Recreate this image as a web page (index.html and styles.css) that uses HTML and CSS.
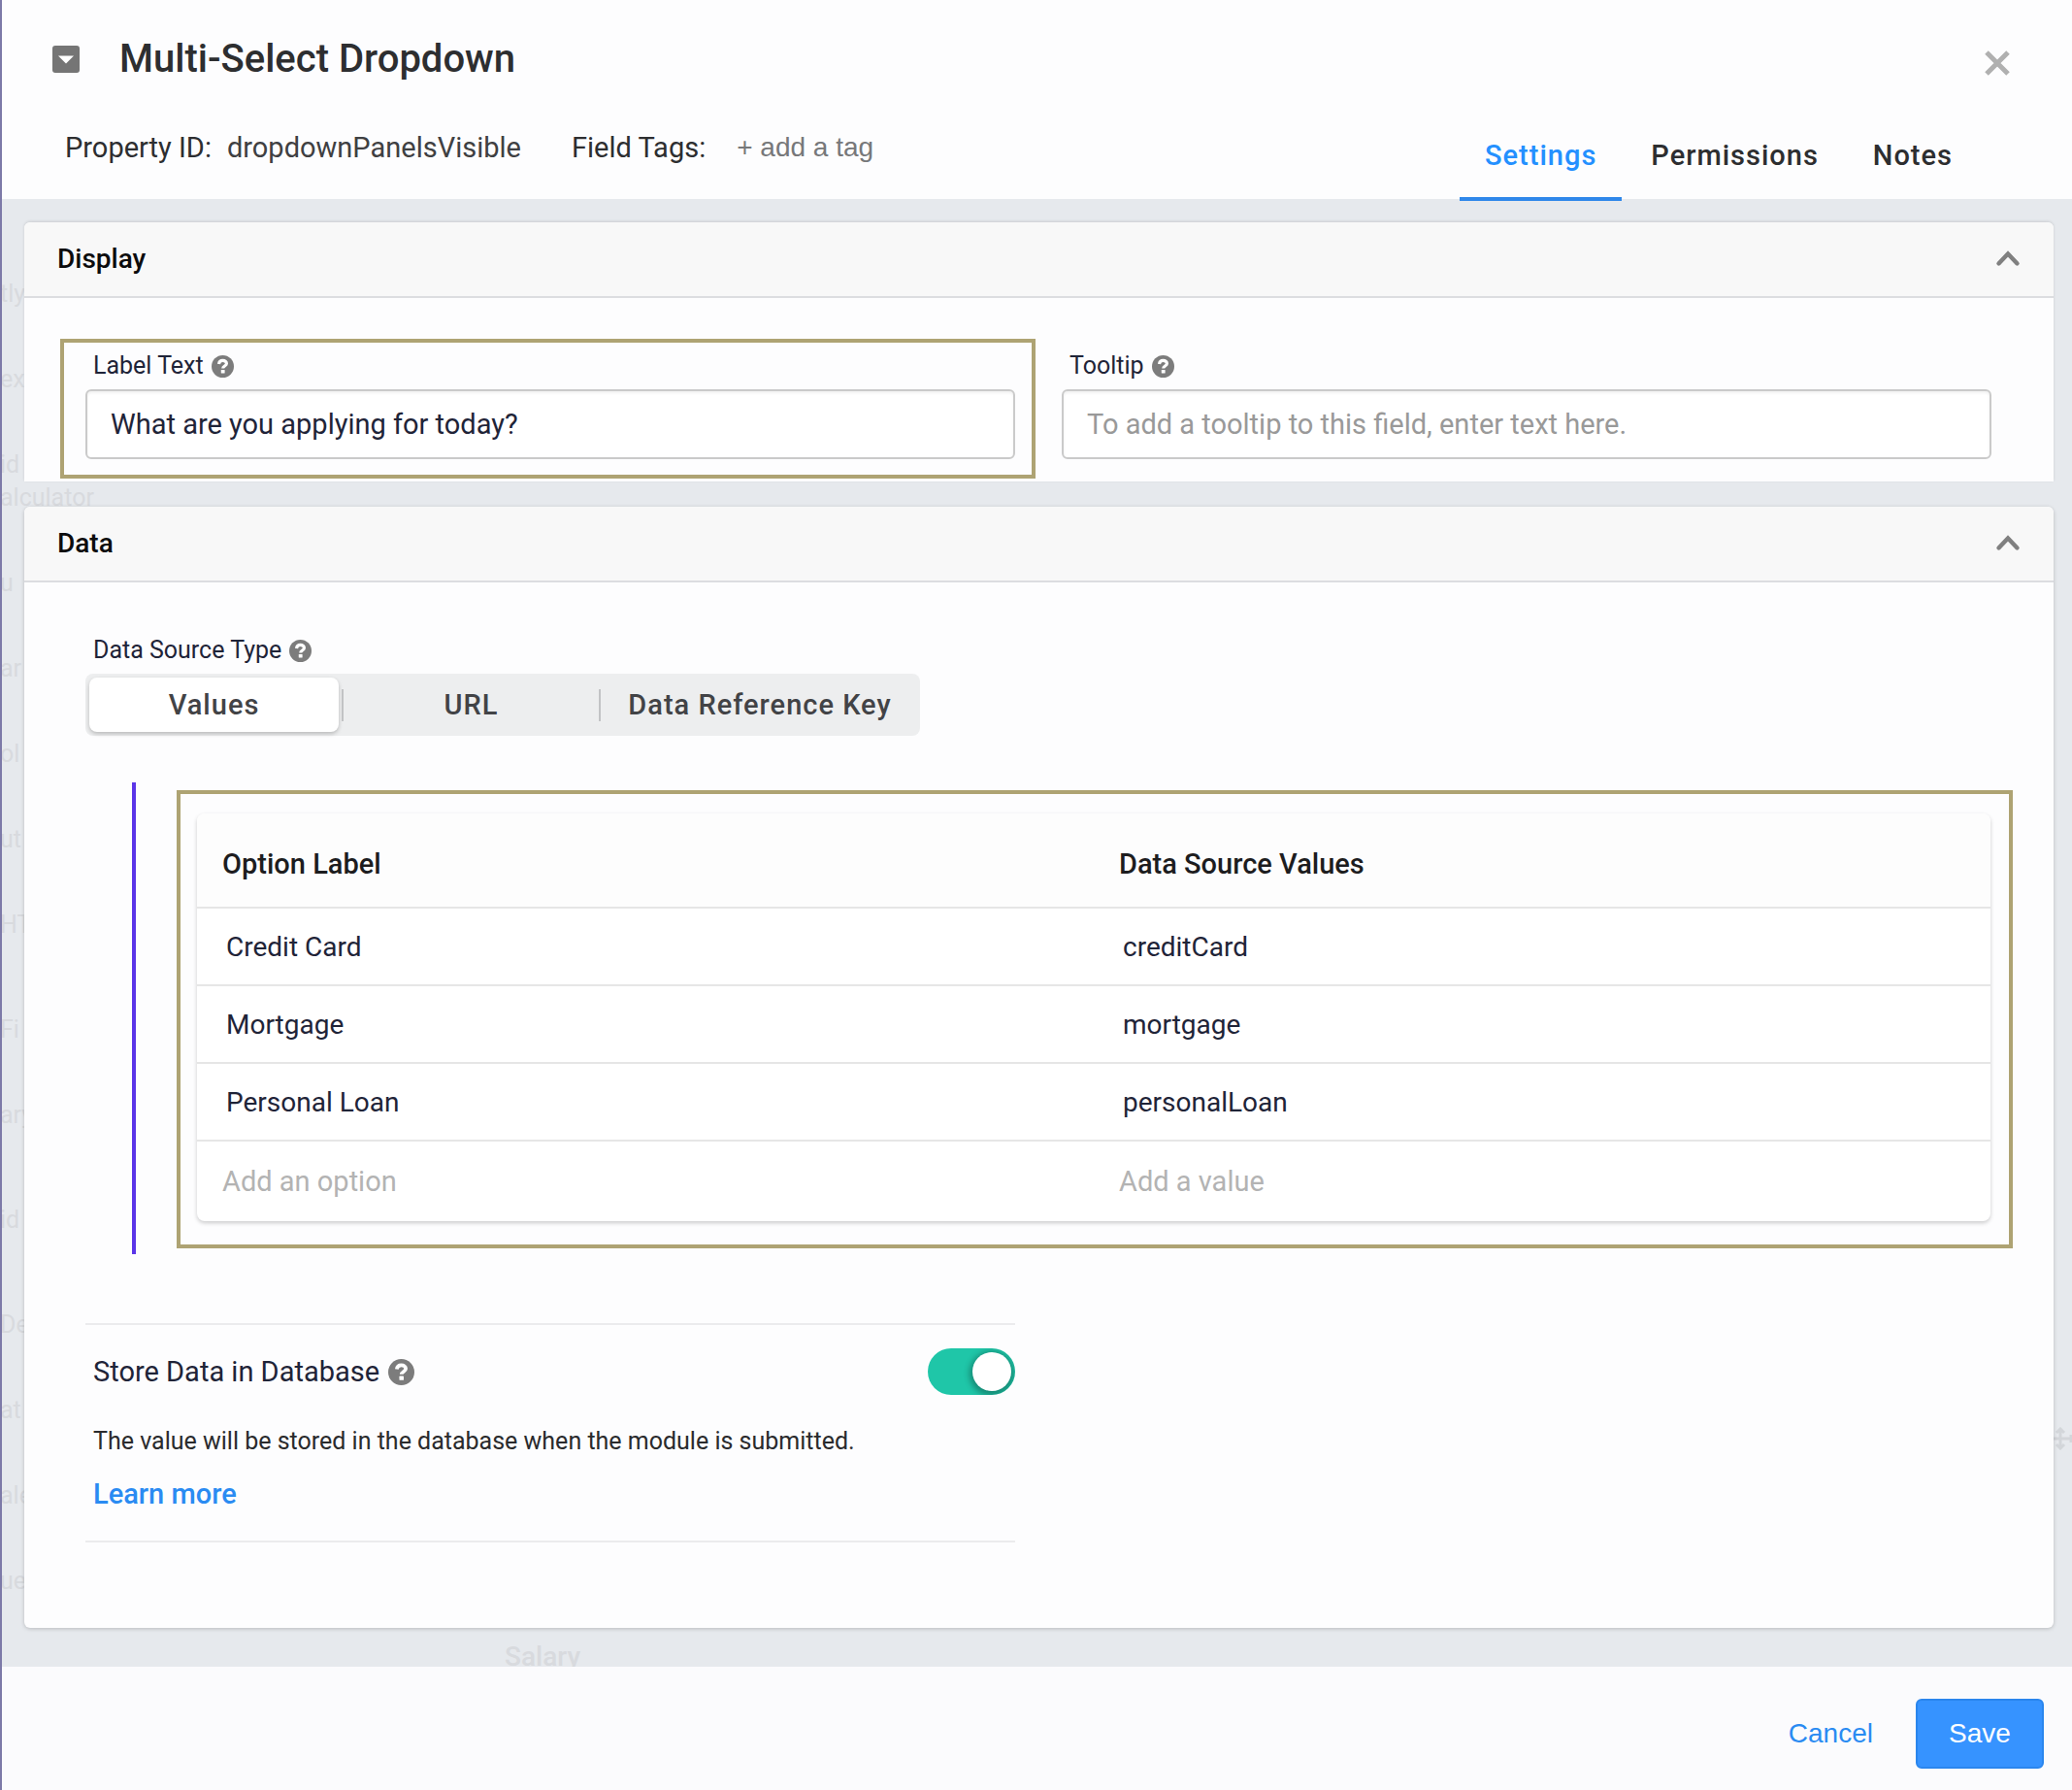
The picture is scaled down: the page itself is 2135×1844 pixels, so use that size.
FILE: index.html
```html
<!DOCTYPE html>
<html lang="en">
<head>
  <meta charset="UTF-8" />
  <meta name="viewport" content="width=device-width, initial-scale=1" />
  <title>Multi-Select Dropdown</title>
  <link rel="stylesheet" href="styles.css">
</head>
<body>

  <svg class="sprite" aria-hidden="true">
    <symbol id="help" viewBox="0 0 24 24">
      <circle cx="12" cy="12" r="12" fill="#7c7c7c" />
      <path d="M7.800 9.400C8.200 6.800 9.800 5.600 12 5.600c2.400 0 4.100 1.400 4.100 3.300 0 2.600-3.900 2.600-3.900 5.200" fill="none" stroke="#fff" stroke-width="3.300" />
      <rect x="10.200" y="15.600" width="4" height="3.800" rx="0.600" fill="#fff" />
    </symbol>
    <symbol id="chevron" viewBox="0 0 28 28">
      <path d="M4.500 18.500 14 8.500l9.500 10" fill="none" stroke="#808080" stroke-width="4.400" stroke-linecap="round" />
    </symbol>
  </svg>

  <!-- page behind the dialog -->
  <div class="backdrop" aria-hidden="true">
    <ul class="ghost-list">
      <li>tly</li><li>ex</li><li>id</li>
      <li class="ghost-sub">alculator</li>
      <li>u</li><li>ar</li><li>ol</li><li>ut</li><li>HTI</li>
      <li class="ghost-gap">Fi</li><li>ary</li>
      <li class="ghost-gap">id</li>
      <li class="ghost-gap">De</li><li>at</li><li>ale</li><li>ue</li>
    </ul>
    <span class="ghost-field">Salary</span>
    <svg class="ghost-move" viewBox="0 0 24 24"><path d="M8 2v20M-2 12h20M4 6l4-4 4 4M4 18l4 4 4-4M19 8v8M24 7l-5 5 5 5" fill="none" stroke="#d3d6da" stroke-width="3" /></svg>
  </div>

  <main class="dialog">
    <header class="dialog-header">
      <div class="heading">
        <div class="title-row">
          <svg class="type-icon" viewBox="0 0 28 28"><rect width="28" height="28" rx="3" fill="#757575" /><path d="M6 10.500h16l-8 8z" fill="#fff" /></svg>
          <h1>Multi-Select Dropdown</h1>
        </div>
        <div class="meta">
          <span>Property ID:</span>
          <span class="property-id">dropdownPanelsVisible</span>
          <span class="tags-label">Field Tags:</span>
          <button class="add-tag" type="button">+ add a tag</button>
        </div>
      </div>
      <div class="header-side">
        <button class="close" type="button" aria-label="Close">
          <svg viewBox="0 0 28 28"><path d="M3 3l22 22M25 3 3 25" stroke="#b0b0b0" stroke-width="5" /></svg>
        </button>
        <nav class="tabs">
          <a class="tab active" href="#settings">Settings</a>
          <a class="tab" href="#permissions">Permissions</a>
          <a class="tab" href="#notes">Notes</a>
        </nav>
      </div>
    </header>

    <div class="dialog-body" id="settings">
      <section class="card card-display">
        <div class="card-header">
          <h2>Display</h2>
          <button class="collapse" type="button" aria-label="Collapse Display"><svg><use href="#chevron" /></svg></button>
        </div>
        <div class="fields">
          <div class="field highlight">
            <div class="label-row"><label for="labelText">Label Text</label><svg class="help"><use href="#help" /></svg></div>
            <input type="text" id="labelText" value="What are you applying for today?" />
          </div>
          <div class="field">
            <div class="label-row"><label for="tooltip">Tooltip</label><svg class="help"><use href="#help" /></svg></div>
            <input type="text" id="tooltip" placeholder="To add a tooltip to this field, enter text here." />
          </div>
        </div>
      </section>

      <section class="card card-data">
        <div class="card-header">
          <h2>Data</h2>
          <button class="collapse" type="button" aria-label="Collapse Data"><svg><use href="#chevron" /></svg></button>
        </div>
        <div class="data-body">
          <div class="label-row"><span id="sourceType">Data Source Type</span><svg class="help"><use href="#help" /></svg></div>
          <div class="segmented" role="group" aria-labelledby="sourceType">
            <button class="segment selected" type="button">Values</button>
            <span class="separator"></span>
            <button class="segment" type="button">URL</button>
            <span class="separator"></span>
            <button class="segment wide" type="button">Data Reference Key</button>
          </div>

          <div class="nested">
            <div class="table-frame">
              <table class="options">
                <thead>
                  <tr><th>Option Label</th><th>Data Source Values</th></tr>
                </thead>
                <tbody>
                  <tr>
                    <td><input type="text" aria-label="Option label 1" value="Credit Card" /></td>
                    <td><input type="text" aria-label="Value 1" value="creditCard" /></td>
                  </tr>
                  <tr>
                    <td><input type="text" aria-label="Option label 2" value="Mortgage" /></td>
                    <td><input type="text" aria-label="Value 2" value="mortgage" /></td>
                  </tr>
                  <tr>
                    <td><input type="text" aria-label="Option label 3" value="Personal Loan" /></td>
                    <td><input type="text" aria-label="Value 3" value="personalLoan" /></td>
                  </tr>
                  <tr class="new-row">
                    <td><input type="text" aria-label="New option" placeholder="Add an option" /></td>
                    <td><input type="text" aria-label="New value" placeholder="Add a value" /></td>
                  </tr>
                </tbody>
              </table>
            </div>
          </div>

          <div class="store">
            <div class="store-row">
              <label for="storeData">Store Data in Database</label>
              <svg class="help help-large"><use href="#help" /></svg>
              <input class="toggle" type="checkbox" id="storeData" checked />
            </div>
            <p>The value will be stored in the database when the module is submitted.</p>
            <a class="learn-more" href="#learn-more">Learn more</a>
          </div>
        </div>
      </section>
    </div>

    <footer class="dialog-footer">
      <button class="cancel" type="button">Cancel</button>
      <button class="save" type="button">Save</button>
    </footer>
  </main>

</body>
</html>
```
FILE: styles.css
```css
* { box-sizing: border-box; }
body { margin: 0; background: #e6e9ed; color: #2d2e30; font-family: Roboto, sans-serif; font-size: 29px; line-height: 34px; }
h1, h2, p, ul { margin: 0; padding: 0; font-weight: 500; }
button, input { font: inherit; color: inherit; }
button { border: none; background: none; padding: 0; cursor: pointer; }
a { text-decoration: none; color: inherit; }
.sprite { display: none; }
svg { display: block; }

/* faint page showing through */
.backdrop { position: absolute; inset: 0; overflow: hidden; color: #d8dade; font-size: 25px; }
.ghost-list { list-style: none; padding-top: 259px; font-weight: 400; }
.ghost-list li { height: 88px; line-height: 88px; }
.ghost-list .ghost-sub { margin-top: -54px; }
.ghost-list .ghost-gap { margin-top: 20px; }
.ghost-field { position: absolute; left: 520px; top: 1690px; font-size: 28px; font-weight: 500; }
.ghost-move { position: absolute; right: -4px; top: 1470px; width: 24px; height: 24px; }

.dialog { position: relative; display: flex; flex-direction: column; min-height: 100vh; border-left: 2px solid #7d7aa8; }

.dialog-header { display: flex; justify-content: space-between; height: 205px; background: #fdfdfe; }
.heading { padding: 37px 0 0 52px; }
.title-row { display: flex; align-items: center; gap: 41px; height: 48px; }
.title-row h1 { font-size: 40px; line-height: 48px; }
.type-icon { width: 28px; height: 28px; }
.meta { display: flex; align-items: center; margin-top: 50px; padding-left: 13px; }
.property-id { margin-left: 16px; color: #3f4042; }
.tags-label { margin-left: 52px; }
.add-tag { margin-left: 32px; color: #77787a; font-family: "Liberation Sans", sans-serif; font-size: 28px; }

.header-side { display: flex; flex-direction: column; justify-content: space-between; align-items: flex-end; }
.close { margin: 51px 63px 0 0; }
.close svg { width: 28px; height: 28px; }
.tabs { display: flex; margin: 0 97px -2px 0; gap: 4px; }
.tab { padding: 0 26px 25px; line-height: 36px; font-weight: 500; letter-spacing: 1px; border-bottom: 4px solid transparent; }
.tab.active { color: #2490ff; border-color: #2f87ea; border-radius: 4px 4px 0 0; }

.dialog-body { flex: 1; padding: 24px 19px 40px 23px; }
.card { background: #fdfdfe; border-radius: 6px; box-shadow: 0 1px 4px rgba(0, 0, 0, 0.2); }
.card-display { margin-bottom: 26px; border-radius: 6px 6px 0 0; box-shadow: 0 -1px 3px rgba(0, 0, 0, 0.12); }
.card-header { display: flex; align-items: center; justify-content: space-between; height: 78px; padding: 0 33px 0 34px; background: #f8f8f8; border-bottom: 2px solid #dcdde0; border-radius: 6px 6px 0 0; }
.card-header h2 { font-size: 28px; color: #0c0c0d; }
.collapse svg { width: 28px; height: 28px; }

.fields { display: grid; grid-template-columns: 1fr 1fr; gap: 48px; padding: 42px 64px 3px 63px; }
.field { margin: 0 -21px 0 -26px; padding: 0 17px 16px 22px; border: 4px solid transparent; }
.field.highlight { border-color: #aea373; }
.label-row { display: flex; align-items: center; gap: 8px; height: 48px; padding-left: 8px; font-size: 25px; color: #1f2438; }
.help { width: 23px; height: 23px; }
.field input { display: block; width: 100%; height: 72px; padding: 0 24px; background: #fff; border: 2px solid #cacaca; border-radius: 6px; box-shadow: inset 0 2px 3px rgba(0, 0, 0, 0.06); color: #1f2438; }
input::placeholder { color: #999; opacity: 1; }

.data-body { padding: 46px 64px 88px 63px; }
.segmented { display: flex; align-items: center; gap: 3px; width: fit-content; height: 64px; padding: 4px; background: #edeeef; border-radius: 8px; }
.segment { min-width: 257px; height: 56px; font-weight: 500; color: #424346; letter-spacing: 1px; border-radius: 8px; }
.segment.wide { min-width: 322px; }
.segment.selected { background: #fff; box-shadow: 0 2px 4px rgba(0, 0, 0, 0.22); }
.separator { width: 2px; height: 33px; background: #c2c3c5; }

.nested { margin: 48px -22px 0 48px; padding: 8px 0 6px 42px; border-left: 4px solid #5b35e8; }
.table-frame { padding: 20px 19px 24px 17px; border: 4px solid #aea373; }
.options { width: 100%; table-layout: fixed; border-collapse: separate; border-spacing: 0; background: #fff; border-radius: 8px; box-shadow: 0 2px 4px rgba(0, 0, 0, 0.2); }
.options th { height: 98px; padding: 8px 26px 0; text-align: left; font-weight: 500; color: #1d1d1f; background: #fdfdfd; border-bottom: 2px solid #e6e6e6; }
.options th:first-child { border-top-left-radius: 8px; }
.options th:last-child { border-top-right-radius: 8px; }
.options td { height: 80px; padding: 0; border-bottom: 2px solid #e6e6e6; }
.options input { display: block; width: 100%; height: 78px; padding: 0 30px; border: none; background: none; font-size: 28px; color: #1f2438; }
.options .new-row td { height: 82px; border: none; }
.options .new-row input { padding: 0 26px; font-size: 29px; }
.options .new-row input::placeholder { color: #b3b3b3; }

.store { width: calc(50% - 24px); margin-top: 71px; padding: 24px 0 31px; border-top: 2px solid #ebebed; border-bottom: 2px solid #ebebed; }
.store-row { display: flex; align-items: center; gap: 9px; height: 48px; padding-left: 8px; color: #1f2438; }
.help-large { width: 27px; height: 27px; }
.toggle { appearance: none; flex: none; width: 90px; height: 48px; margin: 0 0 0 auto; padding: 4px; border-radius: 24px; background: #1fc6a8; overflow: hidden; cursor: pointer; }
.toggle::before { content: ""; display: block; width: 40px; height: 40px; border-radius: 50%; background: #fff; box-shadow: 0 2px 6px 3px rgba(0, 0, 0, 0.3); }
.toggle:checked::before { margin-left: auto; }
.store p { margin: 31px 0 20px; padding-left: 8px; font-size: 25px; font-weight: 400; color: #2a2b2d; }
.learn-more { display: block; width: fit-content; padding-left: 8px; font-weight: 500; color: #2a8bf2; }

.dialog-footer { display: flex; justify-content: flex-end; align-items: flex-start; gap: 44px; height: 127px; padding: 33px 29px 0; background: #fbfbfd; font-family: "Liberation Sans", sans-serif; font-size: 28px; }
.cancel { height: 72px; color: #2a8bf2; }
.save { width: 132px; height: 72px; color: #fff; background: #3693ff; border: 2px solid #2a86ee; border-radius: 6px; }
```
